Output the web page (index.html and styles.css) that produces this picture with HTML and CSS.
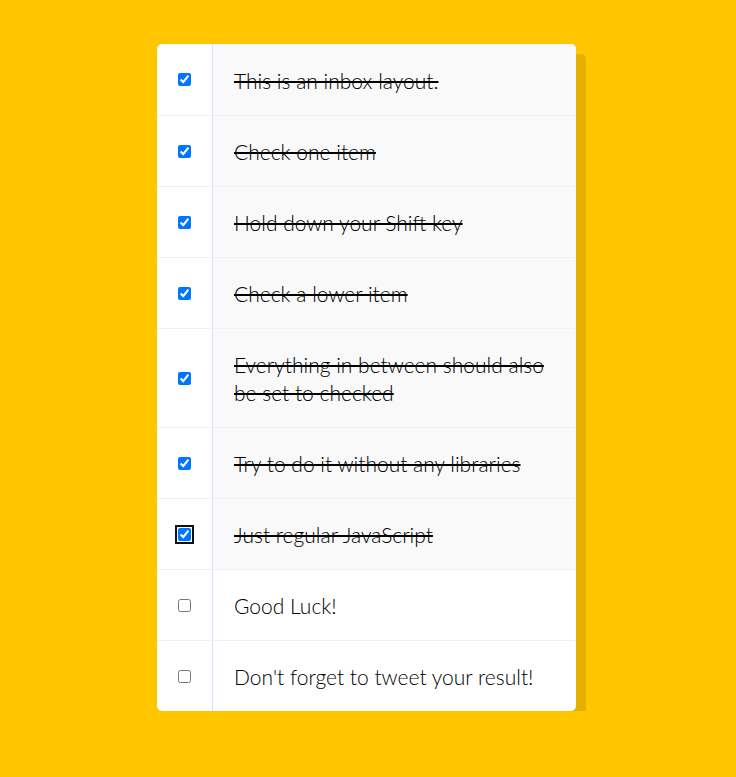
FILE: index.html
```html
<!DOCTYPE html>
<html>
<head>
<meta charset="utf-8">
<title>Hold Shift to Check Multiple Checkboxes</title>
<link rel="stylesheet" href="styles.css">
</head>
<body>
<div class="inbox">
  <div class="item"><input type="checkbox" checked><p>This is an inbox layout.</p></div>
  <div class="item"><input type="checkbox" checked><p>Check one item</p></div>
  <div class="item"><input type="checkbox" checked><p>Hold down your Shift key</p></div>
  <div class="item"><input type="checkbox" checked><p>Check a lower item</p></div>
  <div class="item"><input type="checkbox" checked><p>Everything in between should also be set to checked</p></div>
  <div class="item"><input type="checkbox" checked><p>Try to do it without any libraries</p></div>
  <div class="item"><input type="checkbox" class="focused" checked><p>Just regular JavaScript</p></div>
  <div class="item"><input type="checkbox"><p>Good Luck!</p></div>
  <div class="item"><input type="checkbox"><p>Don't forget to tweet your result!</p></div>
</div>
</body>
</html>
```
FILE: styles.css
```css
html {
  background: #ffc600;
  font-family: "Lato", "Open Sans", sans-serif;
}

body {
  margin: 0;
  padding-top: 44px;
}

.inbox {
  width: 419px;
  margin: 0 auto 0 157px;
  background: #ffffff;
  border-radius: 5px;
  box-shadow: 10px 10px 0 rgba(0, 0, 0, 0.1);
}

.item {
  display: flex;
  align-items: stretch;
  border-bottom: 1px solid #f1f1f1;
}

.item:last-child {
  border-bottom: 0;
}

.item input[type="checkbox"] {
  width: 13px;
  height: 13px;
  margin: 0 21px;
  align-self: center;
  accent-color: #0075ff;
}

.item input.focused {
  outline: 2px solid #111111;
  outline-offset: 1px;
  border-radius: 2px;
}

.item p {
  flex: 1;
  margin: 0;
  padding: 22px 21px 20px;
  font-size: 21px;
  font-weight: 300;
  line-height: 28px;
  color: #000000;
  border-left: 1px solid #d1e2ff;
}

.item:first-child p {
  padding-top: 23px;
  border-top-right-radius: 5px;
}

.item input:checked + p {
  background: #f9f9f9;
  text-decoration: line-through;
  text-decoration-thickness: 2px;
}
```
